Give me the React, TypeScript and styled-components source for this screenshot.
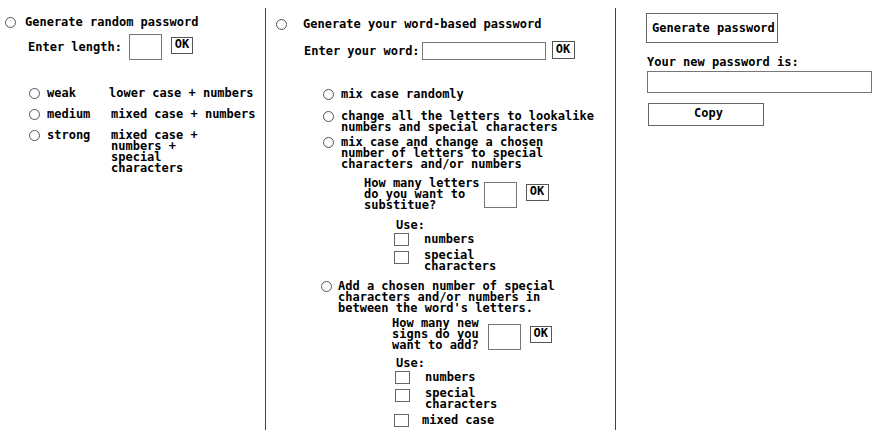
import React from "react";
import styled, { createGlobalStyle } from "styled-components";

const Global = createGlobalStyle`
  html, body { margin: 0; padding: 0; background: #fff; }
  body {
    font-family: "DejaVu Sans Mono", "Liberation Mono", monospace;
    font-size: 12px;
    font-weight: bold;
    color: #000;
  }
`;

const Page = styled.div`
  display: flex;
  width: 889px;
  height: 430px;
  overflow: hidden;
`;

const Column = styled.div<{ $w?: number; $divider?: boolean; $pl: number; $pt: number }>`
  box-sizing: border-box;
  width: ${(p) => (p.$w ? `${p.$w}px` : "auto")};
  flex: ${(p) => (p.$w ? "none" : "1")};
  margin-top: 8px;
  height: 430px;
  border-left: ${(p) => (p.$divider ? "1px solid #444" : "none")};
  padding-left: ${(p) => p.$pl}px;
  padding-top: ${(p) => p.$pt}px;
  display: flex;
  flex-direction: column;
  align-items: flex-start;
`;

const Radio = styled.span`
  display: inline-block;
  box-sizing: border-box;
  width: 11px;
  height: 11px;
  border: 1px solid #555;
  border-radius: 50%;
  flex: none;
`;

const Check = styled.span<{ $mt?: number }>`
  display: inline-block;
  box-sizing: border-box;
  width: 15px;
  height: 13px;
  border: 1px solid #666;
  flex: none;
  margin-top: ${(p) => p.$mt ?? 0}px;
`;

const Row = styled.div<{ $mt?: number; $ml?: number; $gap?: number; $align?: string }>`
  display: flex;
  align-items: ${(p) => p.$align ?? "center"};
  gap: ${(p) => p.$gap ?? 0}px;
  margin-top: ${(p) => p.$mt ?? 0}px;
  margin-left: ${(p) => p.$ml ?? 0}px;
`;

const Text = styled.div<{ $mt?: number; $ml?: number }>`
  line-height: 11px;
  white-space: nowrap;
  margin-top: ${(p) => p.$mt ?? 0}px;
  margin-left: ${(p) => p.$ml ?? 0}px;
`;

const Field = styled.span<{ $w: number; $h: number }>`
  display: inline-block;
  box-sizing: border-box;
  width: ${(p) => p.$w}px;
  height: ${(p) => p.$h}px;
  border: 1px solid #777;
  background: #fff;
  flex: none;
`;

const OkButton = styled.span<{ $w: number; $h: number }>`
  display: inline-flex;
  align-items: center;
  justify-content: center;
  box-sizing: border-box;
  width: ${(p) => p.$w}px;
  height: ${(p) => p.$h}px;
  border: 1px solid #555;
  background: #fff;
  line-height: 11px;
  padding-bottom: 2px;
  flex: none;
`;

const Strength = styled.div`
  display: grid;
  grid-template-columns: 18px 62px auto;
  row-gap: 10px;
  margin-top: 28px;
  margin-left: 24px;
  line-height: 11px;
  align-items: start;
`;

const Desc = styled.div<{ $ml?: number }>`
  margin-left: ${(p) => p.$ml ?? 0}px;
  white-space: nowrap;
`;

const Options = styled.div`
  display: flex;
  flex-direction: column;
  align-items: flex-start;
  margin-top: 28px;
  margin-left: 47px;
`;

const Option = styled.div<{ $mt: number; $ml?: number; $gap?: number }>`
  display: flex;
  align-items: flex-start;
  gap: ${(p) => p.$gap ?? 7}px;
  margin-top: ${(p) => p.$mt}px;
  margin-left: ${(p) => p.$ml ?? 0}px;
  line-height: 11px;
  white-space: nowrap;
`;

const Sub = styled.div<{ $ml: number }>`
  display: flex;
  flex-direction: column;
  align-items: flex-start;
  margin-left: ${(p) => p.$ml}px;
`;

const BigButton = styled.span<{ $w: number; $h: number; $mt: number; $ml?: number; $center?: boolean }>`
  display: flex;
  align-items: center;
  justify-content: ${(p) => (p.$center ? "center" : "flex-start")};
  box-sizing: border-box;
  width: ${(p) => p.$w}px;
  height: ${(p) => p.$h}px;
  margin-top: ${(p) => p.$mt}px;
  margin-left: ${(p) => p.$ml ?? 0}px;
  padding: 0 0 0 5px;
  border: 1px solid #666;
  background: #fff;
  line-height: 11px;
  white-space: nowrap;
  padding-bottom: ${(p) => (p.$center ? 3 : 0)}px;
`;

export default function App() {
  return (
    <>
      <Global />
      <Page>
        <Column $w={265} $pl={5} $pt={9}>
          <Row $gap={9}>
            <Radio />
            <Text>Generate random password</Text>
          </Row>
          <Row $mt={6} $ml={23}>
            <Text>Enter length:</Text>
            <Field $w={33} $h={26} style={{ marginLeft: 7 }} />
            <OkButton $w={22} $h={17} style={{ marginLeft: 9, marginBottom: 3 }}>OK</OkButton>
          </Row>
          <Strength>
            <Radio />
            <div>weak</div>
            <Desc>lower case + numbers</Desc>
            <Radio />
            <div>medium</div>
            <Desc $ml={2}>mixed case + numbers</Desc>
            <Radio />
            <div>strong</div>
            <Desc $ml={2}>
              mixed case +<br />
              numbers +<br />
              special<br />
              characters
            </Desc>
          </Strength>
        </Column>

        <Column $w={350} $divider $pl={10} $pt={11}>
          <Row $gap={16}>
            <Radio />
            <Text>Generate your word-based password</Text>
          </Row>
          <Row $mt={11} $ml={28}>
            <Text>Enter your word:</Text>
            <Field $w={124} $h={18} style={{ marginLeft: 2 }} />
            <OkButton $w={23} $h={18} style={{ marginLeft: 6, marginBottom: 2 }}>OK</OkButton>
          </Row>
          <Options>
            <Option $mt={0}>
              <Radio />
              <div>mix case randomly</div>
            </Option>
            <Option $mt={11}>
              <Radio />
              <div>
                change all the letters to lookalike<br />
                numbers and special characters
              </div>
            </Option>
            <Option $mt={4}>
              <Radio />
              <div>
                mix case and change a chosen<br />
                number of letters to special<br />
                characters and/or numbers
              </div>
            </Option>
            <Sub $ml={41}>
              <Row $mt={8}>
                <Text>
                  How many letters<br />
                  do you want to<br />
                  substitue?
                </Text>
                <Field $w={33} $h={26} style={{ marginLeft: 4 }} />
                <OkButton $w={23} $h={17} style={{ marginLeft: 9, marginBottom: 4 }}>OK</OkButton>
              </Row>
              <Text $mt={9} $ml={32}>Use:</Text>
              <Row $mt={2} $ml={30} $gap={15}>
                <Check />
                <Text>numbers</Text>
              </Row>
              <Row $mt={4} $ml={30} $gap={15} $align="flex-start">
                <Check $mt={1} />
                <Text>
                  special<br />
                  characters
                </Text>
              </Row>
            </Sub>
            <Option $mt={9} $ml={-2} $gap={6}>
              <Radio />
              <div>
                Add a chosen number of special<br />
                characters and/or numbers in<br />
                between the word's letters.
              </div>
            </Option>
            <Sub $ml={69}>
              <Row $mt={4}>
                <Text>
                  How many new<br />
                  signs do you<br />
                  want to add?
                </Text>
                <Field $w={33} $h={26} style={{ marginLeft: 9, marginTop: 4 }} />
                <OkButton $w={22} $h={17} style={{ marginLeft: 9 }}>OK</OkButton>
              </Row>
              <Text $mt={7} $ml={4}>Use:</Text>
              <Row $mt={2} $ml={3} $gap={15}>
                <Check />
                <Text>numbers</Text>
              </Row>
              <Row $mt={4} $ml={3} $gap={15} $align="flex-start">
                <Check $mt={1} />
                <Text>
                  special<br />
                  characters
                </Text>
              </Row>
              <Row $mt={4} $ml={2} $gap={13}>
                <Check />
                <Text>mixed case</Text>
              </Row>
            </Sub>
          </Options>
        </Column>

        <Column $divider $pl={30} $pt={5}>
          <BigButton $w={132} $h={30} $mt={0}>Generate password</BigButton>
          <Text $mt={14} $ml={1}>Your new password is:</Text>
          <Field $w={225} $h={22} style={{ marginTop: 3, marginLeft: 1 }} />
          <BigButton $w={116} $h={23} $mt={10} $ml={2} $center>Copy</BigButton>
        </Column>
      </Page>
    </>
  );
}
